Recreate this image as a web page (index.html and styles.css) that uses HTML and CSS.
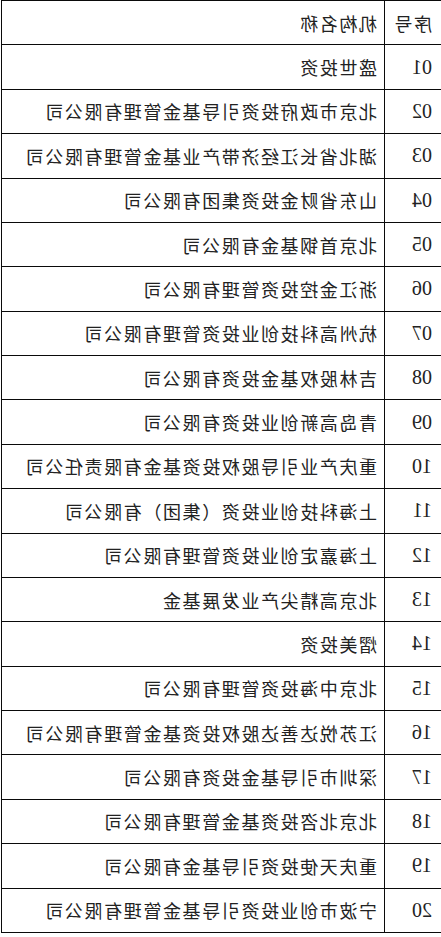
FILE: index.html
```html
<!DOCTYPE html>
<html lang="zh">
<head>
<meta charset="utf-8">
<link rel="stylesheet" href="styles.css">
</head>
<body>
<div class="page">
  <div class="table">
    <div class="row"><div class="num head">序号</div><div class="name">机构名称</div></div>
    <div class="row"><div class="num">01</div><div class="name">盛世投资</div></div>
    <div class="row"><div class="num">02</div><div class="name">北京市政府投资引导基金管理有限公司</div></div>
    <div class="row"><div class="num">03</div><div class="name">湖北省长江经济带产业基金管理有限公司</div></div>
    <div class="row"><div class="num">04</div><div class="name">山东省财金投资集团有限公司</div></div>
    <div class="row"><div class="num">05</div><div class="name">北京首钢基金有限公司</div></div>
    <div class="row"><div class="num">06</div><div class="name">浙江金控投资管理有限公司</div></div>
    <div class="row"><div class="num">07</div><div class="name">杭州高科技创业投资管理有限公司</div></div>
    <div class="row"><div class="num">08</div><div class="name">吉林股权基金投资有限公司</div></div>
    <div class="row"><div class="num">09</div><div class="name">青岛高新创业投资有限公司</div></div>
    <div class="row"><div class="num">10</div><div class="name">重庆产业引导股权投资基金有限责任公司</div></div>
    <div class="row"><div class="num">11</div><div class="name">上海科技创业投资（集团）有限公司</div></div>
    <div class="row"><div class="num">12</div><div class="name">上海嘉定创业投资管理有限公司</div></div>
    <div class="row"><div class="num">13</div><div class="name">北京高精尖产业发展基金</div></div>
    <div class="row"><div class="num">14</div><div class="name">熠美投资</div></div>
    <div class="row"><div class="num">15</div><div class="name">北京中海投资管理有限公司</div></div>
    <div class="row"><div class="num">16</div><div class="name">江苏悦达善达股权投资基金管理有限公司</div></div>
    <div class="row"><div class="num">17</div><div class="name">深圳市引导基金投资有限公司</div></div>
    <div class="row"><div class="num">18</div><div class="name">北京北咨投资基金管理有限公司</div></div>
    <div class="row"><div class="num">19</div><div class="name">重庆天使投资引导基金有限公司</div></div>
    <div class="row"><div class="num">20</div><div class="name">宁波市创业投资引导基金管理有限公司</div></div>
  </div>
</div>
</body>
</html>
```
FILE: styles.css
```css
html, body {
  margin: 0;
  padding: 0;
  background: #ffffff;
}
.page {
  width: 441px;
  height: 937px;
  overflow: hidden;
  transform: scaleX(-1);
  font-family: "Liberation Serif", "Noto Sans CJK SC", serif;
  color: #222222;
}
.table {
  width: 439px;
  border-top: 1px solid #0a0a0a;
  border-right: 1px solid #0a0a0a;
}
.row {
  display: grid;
  grid-template-columns: 57px 1fr;
  height: 43.38px;
  border-bottom: 1px solid #0a0a0a;
}
.num {
  border-right: 1px solid #0a0a0a;
  display: flex;
  align-items: center;
  padding-left: 9px;
  font-size: 20px;
}
.num.head {
  font-size: 18px;
  letter-spacing: 1.6px;
}
.name {
  display: flex;
  align-items: center;
  padding-left: 7px;
  font-size: 18px;
  letter-spacing: 1.6px;
  white-space: nowrap;
}
```
